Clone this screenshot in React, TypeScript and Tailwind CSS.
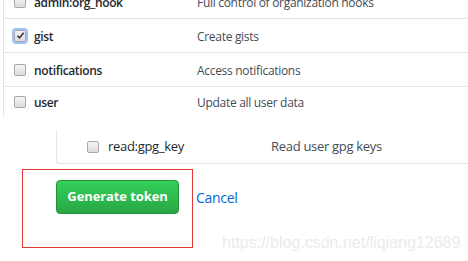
import React from "react";

function Box({ checked = false }: { checked?: boolean }) {
  return (
    <span
      className={
        "relative inline-flex h-[12px] w-[12px] shrink-0 items-center justify-center rounded-[2px] border border-[#a8a8a8] bg-gradient-to-b from-[#f4f4f4] to-[#dcdcdc] " +
        (checked ? "outline outline-2 outline-[#9ec2f5]" : "")
      }
    >
      {checked && (
        <svg width="9" height="9" viewBox="0 0 9 9" className="block">
          <path d="M1.5 4.8 L3.6 6.9 L7.6 1.8" fill="none" stroke="#333" strokeWidth="1.6" />
        </svg>
      )}
    </span>
  );
}

function Row({
  label,
  desc,
  checked,
  border = true,
}: {
  label: string;
  desc: string;
  checked?: boolean;
  border?: boolean;
}) {
  return (
    <div
      className={
        "flex h-[34px] items-center " + (border ? "border-b border-[#e1e4e8]" : "")
      }
    >
      <div className="flex w-[193px] items-center pl-[10px]">
        <Box checked={checked} />
        <span className="ml-[8px] pt-[2px] text-[12px] font-semibold tracking-[-0.35px] text-[#24292e]">
          {label}
        </span>
      </div>
      <span className="pt-[2px] text-[12px] tracking-[-0.3px] text-[#444d56]">{desc}</span>
    </div>
  );
}

export default function App() {
  return (
    <div
      className="relative h-[261px] w-[468px] overflow-hidden bg-white"
      style={{ fontFamily: '"Open Sans", "Noto Sans", sans-serif' }}
    >
      <div className="mt-[-15px] ml-[3px] border-l border-[#e1e4e8]">
        <Row label="admin:org_hook" desc="Full control of organization hooks" />
        <Row label="gist" desc="Create gists" checked />
        <Row label="notifications" desc="Access notifications" />
        <div className="flex h-[29px] items-center">
          <div className="flex w-[193px] items-center pl-[10px]">
            <Box />
            <span className="ml-[8px] pt-[2px] text-[12px] font-semibold tracking-[-0.35px] text-[#24292e]">
              user
            </span>
          </div>
          <span className="pt-[2px] text-[12px] tracking-[-0.3px] text-[#444d56]">
            Update all user data
          </span>
        </div>
      </div>

      <div className="ml-[56px] mt-[14px] mr-[-20px] flex h-[34px] items-center rounded-bl-[3px] border-b border-l border-[#e1e4e8]">
        <div className="flex w-[214px] items-center pl-[30px] pt-[1px]">
          <Box />
          <span className="ml-[9px] text-[13px] tracking-[-0.3px] text-[#24292e]">read:gpg_key</span>
        </div>
        <span className="pt-[1px] text-[13px] tracking-[-0.3px] text-[#444d56]">Read user gpg keys</span>
      </div>

      <div className="mt-[16px] flex items-center pl-[56px]">
        <button className="h-[34px] w-[123px] rounded-[4px] border border-[#22923c] bg-gradient-to-b from-[#34d058] to-[#28a745] text-[13px] font-bold tracking-[-0.1px] text-white">
          Generate token
        </button>
        <a className="ml-[17px] text-[14px] tracking-[-0.3px] text-[#0366d6]">Cancel</a>
      </div>

      <div className="pointer-events-none absolute left-[22px] top-[169px] h-[79px] w-[171px] border border-[#e53935]" />

      <div
        className="pointer-events-none absolute left-[222px] top-[231px] text-[16px] text-[#ebebeb]"
        style={{ fontFamily: '"Liberation Sans", Arial, sans-serif' }}
      >
        https://blog.csdn.net/liqiang12689
      </div>
    </div>
  );
}
